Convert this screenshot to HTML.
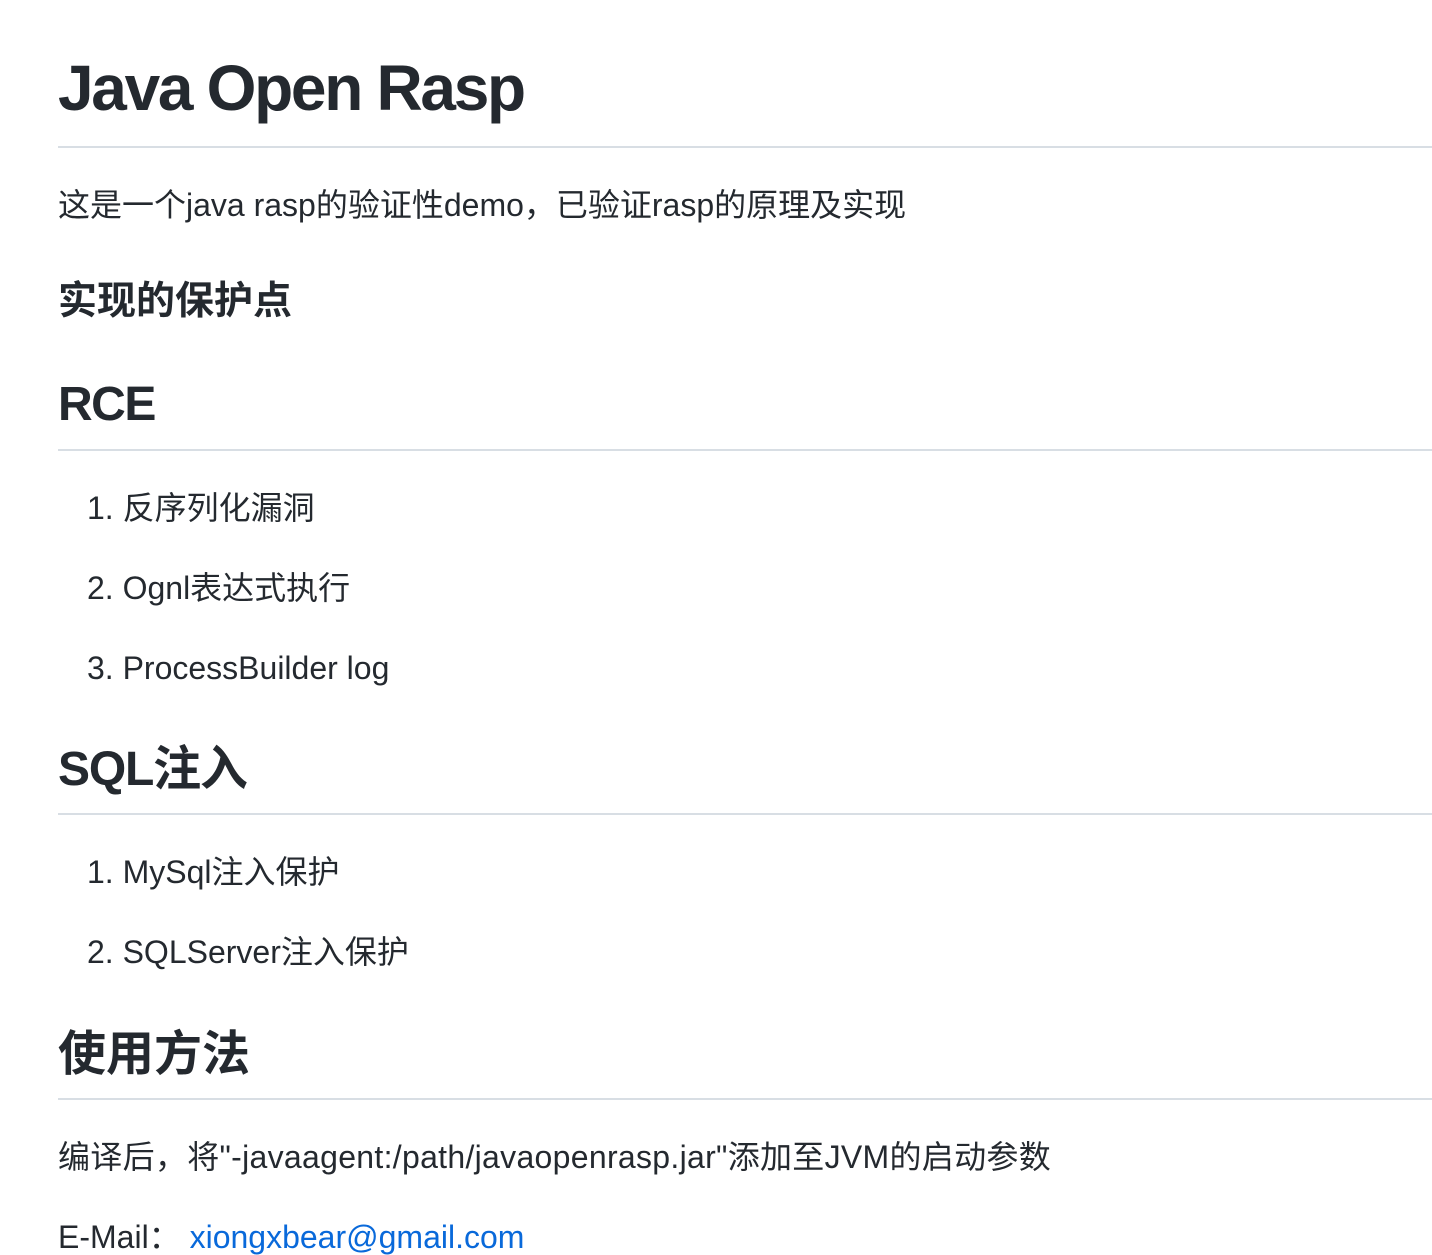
<!DOCTYPE html>
<html><head><meta charset="utf-8"><style>
body{margin:0;width:1432px;height:1252px;overflow:hidden;background:#fff;color:#24292f;font-family:"Liberation Sans","Noto Sans CJK SC",sans-serif;}
.a{position:absolute;left:58px;white-space:nowrap;line-height:1;}
.hr{position:absolute;left:58px;right:0;height:2px;background:#d8dee4;}
.h1{font-size:64px;font-weight:600;letter-spacing:-2.3px;}
.h2{font-size:48px;font-weight:600;}
.h3{font-size:39px;font-weight:700;}
.p{font-size:32px;}
.li{left:87px;font-size:32px;}
a{color:#0969da;text-decoration:none;}
</style></head><body>
<div class="a h1" style="top:56px">Java Open Rasp</div>
<div class="hr" style="top:146px"></div>
<div class="a p" style="top:189px">这是一个java rasp的验证性demo，已验证rasp的原理及实现</div>
<div class="a h3" style="top:282px">实现的保护点</div>
<div class="a h2" style="top:381px;letter-spacing:-1.5px">RCE</div>
<div class="hr" style="top:449px"></div>
<div class="a li" style="top:492px">1. 反序列化漏洞</div>
<div class="a li" style="top:572px">2. Ognl表达式执行</div>
<div class="a li" style="top:652px">3. ProcessBuilder log</div>
<div class="a h2" style="top:746px;letter-spacing:-1.2px">SQL注入</div>
<div class="hr" style="top:813px"></div>
<div class="a li" style="top:856px">1. MySql注入保护</div>
<div class="a li" style="top:936px">2. SQLServer注入保护</div>
<div class="a h2" style="top:1031px">使用方法</div>
<div class="hr" style="top:1098px"></div>
<div class="a p" style="top:1141px;letter-spacing:0.3px">编译后，将"-javaagent:/path/javaopenrasp.jar"添加至JVM的启动参数</div>
<div class="a p" style="top:1221px">E-Mail： <a>xiongxbear@gmail.com</a></div>
</body></html>
